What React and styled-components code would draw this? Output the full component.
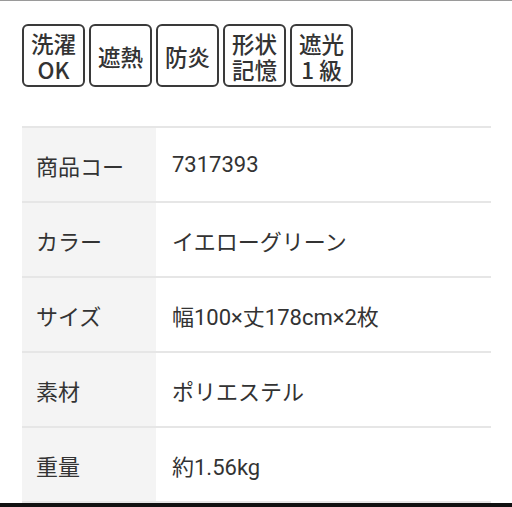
import React from "react";
import styled, { createGlobalStyle } from "styled-components";

const GlobalStyle = createGlobalStyle`
  html, body {
    margin: 0;
    padding: 0;
    background: #fff;
    font-family: "Roboto", "Noto Sans CJK JP", sans-serif;
    color: #333;
  }
`;

const Page = styled.div`
  width: 512px;
  height: 507px;
  overflow: hidden;
  display: flex;
  flex-direction: column;
  border-top: 1px solid #9a9a9a;
  box-sizing: border-box;
`;

const Badges = styled.div`
  display: flex;
  gap: 4px;
  padding: 23px 0 0 22px;
  height: 126px;
  box-sizing: border-box;
`;

const Badge = styled.div`
  width: 63px;
  height: 63px;
  box-sizing: border-box;
  border: 2.5px solid #3a3a3a;
  border-radius: 6px;
  display: flex;
  align-items: center;
  justify-content: center;
  text-align: center;
  font-family: "Noto Sans CJK JP", sans-serif;
  font-weight: 500;
  font-size: 22.5px;
  line-height: 26px;
  color: #333;
  white-space: pre;
`;

const Table = styled.div`
  margin: 0 21px 0 22px;
  display: flex;
  flex-direction: column;
  border-bottom: 2px solid #e6e6e6;
`;

const Row = styled.div`
  display: flex;
  height: 75px;
  box-sizing: border-box;
  border-top: 2px solid #e6e6e6;
`;

const Label = styled.div`
  width: 134px;
  background: #f4f4f4;
  display: flex;
  align-items: center;
  padding-left: 14px;
  box-sizing: border-box;
  font-size: 22px;
  color: #333;
`;

const Value = styled.div`
  flex: 1;
  display: flex;
  align-items: center;
  padding-left: 16px;
  font-size: 22px;
  color: #333;
`;

const BottomBar = styled.div`
  margin-top: auto;
  height: 4px;
  background: #111;
`;

const badges = ["洗濯\nOK", "遮熱", "防炎", "形状\n記憶", "遮光\n1 級"];

const rows = [
  ["商品コー", "7317393"],
  ["カラー", "イエローグリーン"],
  ["サイズ", "幅100×丈178cm×2枚"],
  ["素材", "ポリエステル"],
  ["重量", "約1.56kg"],
];

export default function App() {
  return (
    <Page>
      <GlobalStyle />
      <Badges>
        {badges.map((b) => (
          <Badge key={b}>{b}</Badge>
        ))}
      </Badges>
      <Table>
        {rows.map(([k, v]) => (
          <Row key={k}>
            <Label>{k}</Label>
            <Value>{v}</Value>
          </Row>
        ))}
      </Table>
      <BottomBar />
    </Page>
  );
}
